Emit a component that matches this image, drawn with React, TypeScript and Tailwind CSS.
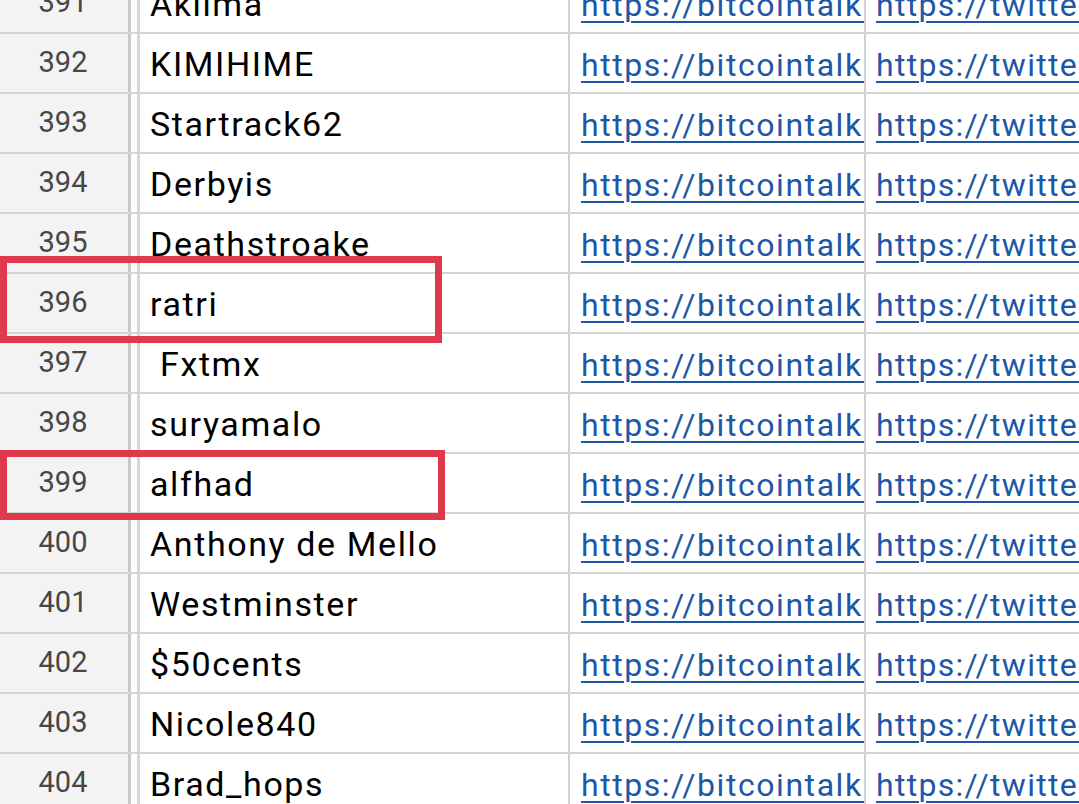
import React from "react";

const rows = [
  { n: 391, name: "Aklima" },
  { n: 392, name: "KIMIHIME" },
  { n: 393, name: "Startrack62" },
  { n: 394, name: "Derbyis" },
  { n: 395, name: "Deathstroake" },
  { n: 396, name: "ratri" },
  { n: 397, name: "\u00a0Fxtmx" },
  { n: 398, name: "suryamalo" },
  { n: 399, name: "alfhad" },
  { n: 400, name: "Anthony de Mello" },
  { n: 401, name: "Westminster" },
  { n: 402, name: "$50cents" },
  { n: 403, name: "Nicole840" },
  { n: 404, name: "Brad_hops" },
];

export default function App() {
  return (
    <div
      className="relative w-[1079px] h-[804px] overflow-hidden bg-white"
      style={{ fontFamily: "Roboto, 'Liberation Sans', sans-serif" }}
    >
      <div className="-mt-[26px]">
        {rows.map((row) => (
          <div
            key={row.n}
            className="flex h-[60px] border-b-2 border-[#d4d4d4]"
          >
            {/* row number */}
            <div className="w-[131px] shrink-0 bg-[#f3f3f3] border-r-[3px] border-[#c8c8c8] flex items-center justify-center pr-[2px] text-[29px] text-[#464646]">
              {row.n}
            </div>
            <div className="w-[6px] shrink-0" />
            {/* name */}
            <div className="w-[431px] shrink-0 border-l-[3px] border-[#d8d8d8] flex items-center pl-[10px] pt-[3px] text-[34px] tracking-[1.6px] text-black whitespace-pre overflow-hidden">
              {row.name}
            </div>
            {/* bitcointalk link */}
            <div className="w-[296px] shrink-0 border-l-2 border-[#d0d0d0] flex items-center pl-[11px] pt-[3px] overflow-hidden whitespace-nowrap">
              <span className="text-[32px] tracking-[1.55px] text-[#1d57a6] underline decoration-2 underline-offset-[5px]">
                https://bitcointalk.org/index.php?action=profile
              </span>
            </div>
            {/* twitter link */}
            <div className="flex-1 border-l-2 border-[#d0d0d0] flex items-center pl-[10px] pt-[3px] overflow-hidden whitespace-nowrap">
              <span className="text-[32px] tracking-[1.3px] text-[#1d57a6] underline decoration-2 underline-offset-[5px]">
                https://twitter.com/
              </span>
            </div>
          </div>
        ))}
      </div>

      {/* annotation boxes */}
      <div className="absolute left-0 top-[256px] w-[442px] h-[87px] border-[7px] border-[#e0384d]" />
      <div className="absolute left-0 top-[450px] w-[445px] h-[70px] border-[7px] border-[#e0384d]" />
    </div>
  );
}
